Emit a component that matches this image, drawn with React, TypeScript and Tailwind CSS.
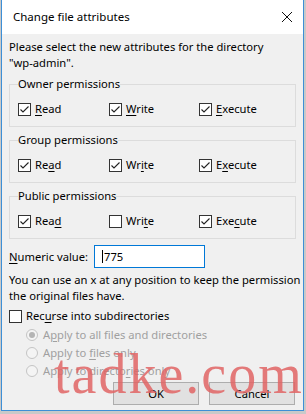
import React from "react";

const font = { fontFamily: '"Noto Sans", "Segoe UI", sans-serif' };

function U({ children }: { children: React.ReactNode }) {
  return <span className="underline underline-offset-[2px] decoration-[1px]">{children}</span>;
}

function Check({ checked }: { checked: boolean }) {
  return (
    <span className="w-[13px] h-[13px] border border-[#333333] bg-white flex items-center justify-center shrink-0">
      {checked && (
        <svg width="11" height="11" viewBox="0 0 11 11">
          <path d="M1.5 5.5 L4 8 L9.5 2.5" fill="none" stroke="#222" strokeWidth="1.1" />
        </svg>
      )}
    </span>
  );
}

function CB({ checked, label }: { checked: boolean; label: React.ReactNode }) {
  return (
    <div className="flex items-center gap-[4px] h-[16px]">
      <Check checked={checked} />
      <span>{label}</span>
    </div>
  );
}

function Group({ title, items }: { title: string; items: [boolean, React.ReactNode][] }) {
  return (
    <fieldset className="border border-[#dcdcdc] mx-0 pb-[9px]">
      <legend className="ml-[8px] px-0 leading-[16px]">{title}</legend>
      <div className="grid grid-cols-[91px_90px_1fr] pl-[8px] mt-[9px]">
        {items.map(([c, l], i) => (
          <CB key={i} checked={c} label={l} />
        ))}
      </div>
    </fieldset>
  );
}

function Radio({ checked, label }: { checked: boolean; label: React.ReactNode }) {
  return (
    <div className="flex items-center gap-[5px] h-[18px] pl-[17px] text-[#a0a0a0]">
      <span className="w-[12px] h-[12px] rounded-full border border-[#c4c4c4] bg-[#f4f4f4] flex items-center justify-center shrink-0">
        {checked && <span className="w-[6px] h-[6px] rounded-full bg-[#b4b4b4]" />}
      </span>
      <span>{label}</span>
    </div>
  );
}

export default function App() {
  return (
    <div className="w-[306px] h-[414px] bg-[#c9c9c9] pl-[1px] overflow-hidden relative" style={font}>
      <div className="w-[303px] h-[411px] border border-t-0 border-[#3d8fd6] bg-[#f0f0f0] flex flex-col text-[11.2px] text-black">
        <div className="h-[34px] shrink-0 bg-white flex items-center justify-between pl-[11px] pr-[8px] text-[11.5px]">
          <span>Change file attributes</span>
          <svg width="12" height="12" viewBox="0 0 12 12" className="mr-[2px]">
            <path d="M1 1 L11 11 M11 1 L1 11" stroke="#111" strokeWidth="1" fill="none" />
          </svg>
        </div>
        <div className="flex flex-col px-[7px] pt-[5px] leading-[16px]">
          <p>
            Please select the new attributes for the directory
            <br />"wp-admin".
          </p>
          <div className="mt-[5px] flex flex-col gap-[5px]">
            <Group
              title="Owner permissions"
              items={[
                [true, <><U>R</U>ead</>],
                [true, <><U>W</U>rite</>],
                [true, <><U>E</U>xecute</>],
              ]}
            />
            <Group
              title="Group permissions"
              items={[
                [true, <>Re<U>a</U>d</>],
                [true, <>Wr<U>i</U>te</>],
                [true, <>E<U>x</U>ecute</>],
              ]}
            />
            <Group
              title="Public permissions"
              items={[
                [true, <>Rea<U>d</U></>],
                [false, <>Wri<U>t</U>e</>],
                [true, <>Exe<U>c</U>ute</>],
              ]}
            />
          </div>
          <div className="flex items-center mt-[6px] gap-[6px]">
            <span>
              <U>N</U>umeric value:
            </span>
            <div className="w-[111px] h-[23px] border border-[#0078d7] bg-white flex items-center pl-[7px]">
              <span className="w-px h-[13px] bg-black mr-[1px]" />
              775
            </div>
          </div>
          <p className="mt-[4px] whitespace-nowrap">
            You can use an x at any position to keep the permission
            <br />
            the original files have.
          </p>
          <div className="mt-[4px]">
            <CB checked={false} label={<>Rec<U>u</U>rse into subdirectories</>} />
          </div>
          <div className="mt-[2px] flex flex-col">
            <Radio checked label={<>A<U>p</U>ply to all files and directories</>} />
            <Radio checked={false} label={<>Apply to <U>f</U>iles only</>} />
            <Radio checked={false} label={<>Apply to directo<U>r</U>ies only</>} />
          </div>
          <div className="flex justify-end gap-[10px] mt-[2px] pr-[1px]">
            <button className="w-[86px] h-[23px] bg-[#e1e1e1] border border-[#adadad]">OK</button>
            <button className="w-[86px] h-[23px] bg-[#e1e1e1] border border-[#adadad]">Cancel</button>
          </div>
        </div>
      </div>
      <div
        className="absolute left-[54px] top-[342px] text-[56px] leading-[64px] tracking-[2px] text-[#e06464]/85 pointer-events-none"
        style={{ fontFamily: '"Liberation Serif", serif' }}
      >
        tadke.com
      </div>
    </div>
  );
}
